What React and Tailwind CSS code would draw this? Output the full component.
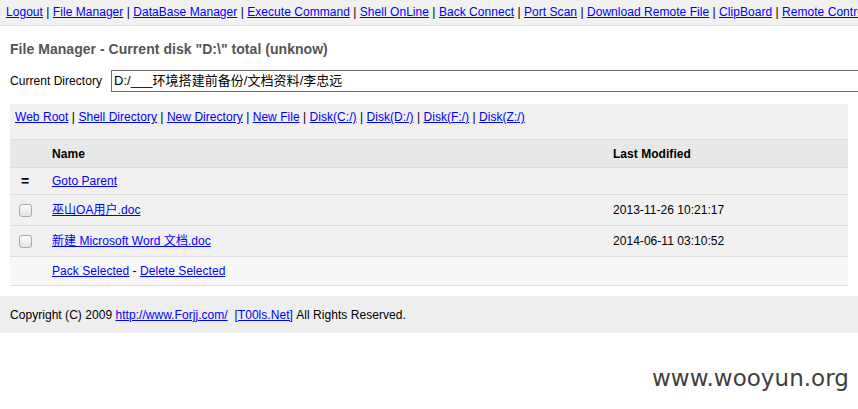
const navLinks = [
  "Logout",
  "File Manager",
  "DataBase Manager",
  "Execute Command",
  "Shell OnLine",
  "Back Connect",
  "Port Scan",
  "Download Remote File",
  "ClipBoard",
  "Remote Control",
];

const dirLinks = [
  "Web Root",
  "Shell Directory",
  "New Directory",
  "New File",
  "Disk(C:/)",
  "Disk(D:/)",
  "Disk(F:/)",
  "Disk(Z:/)",
];

const files = [
  { name: "巫山OA用户.doc", modified: "2013-11-26 10:21:17" },
  { name: "新建 Microsoft Word 文档.doc", modified: "2014-06-11 03:10:52" },
];

function LinkList({ items }) {
  return (
    <span>
      {items.map((item, index) => (
        <span key={item}>
          {index > 0 && <span className="text-black"> | </span>}
          <a href="#" className="text-[#0000ff] underline">
            {item}
          </a>
        </span>
      ))}
    </span>
  );
}

function Checkbox() {
  return (
    <span className="block h-[13px] w-[13px] rounded-[3px] border border-[#a9a9a9] bg-[linear-gradient(180deg,#fdfdfd,#e3e3e3)]" />
  );
}

export default function App() {
  return (
    <div className="relative h-[409px] w-[858px] overflow-hidden bg-white font-['Liberation_Sans',Arial,sans-serif] text-[12px] tracking-[0.04px] text-black">
      <nav className="flex h-[26px] items-center overflow-hidden whitespace-nowrap border-b border-[#dddddd] bg-[#f1f1f1] pb-[1px] pl-[6px]">
        <LinkList items={navLinks} />
      </nav>

      <div className="whitespace-nowrap px-[10px]">
        <h2 className="mt-[14px] text-[14px] font-bold leading-[18px] text-[#555555]">
          File Manager - Current disk "D:\" total (unknow)
        </h2>

        <div className="mt-[12px] flex items-center">
          <span className="w-[101px] shrink-0">Current Directory</span>
          <div className="flex h-[22px] w-[760px] shrink-0 items-center border border-[#707070] px-[2px] font-['Liberation_Sans','Noto_Sans_CJK_SC',sans-serif] text-[13px]">
            D:/___环境搭建前备份/文档资料/李忠远
          </div>
        </div>

        <div className="mt-[12px] h-[36px] border-b border-[#dddddd] bg-[#f1f1f1] pl-[5px] pt-[5px] leading-[16px]">
          <LinkList items={dirLinks} />
        </div>

        <div className="flex h-[28px] items-center border-b border-[#dddddd] bg-[#e8e8e8] font-bold">
          <span className="w-[42px]" />
          <span className="w-[561px]">Name</span>
          <span>Last Modified</span>
        </div>

        <div className="flex h-[27px] items-center border-b border-[#dddddd] bg-[#f1f1f1]">
          <span className="w-[42px] pl-[11px] text-[14px] font-bold">=</span>
          <a href="#" className="text-[#0000ff] underline">
            Goto Parent
          </a>
        </div>

        {files.map((file) => (
          <div
            key={file.name}
            className="flex h-[31px] items-center border-b border-[#dddddd] bg-[#f1f1f1] font-['Liberation_Sans','Noto_Sans_CJK_SC',sans-serif]"
          >
            <span className="w-[42px] pl-[9px]">
              <Checkbox />
            </span>
            <span className="w-[561px]">
              <a href="#" className="text-[#0000ff] underline">
                {file.name}
              </a>
            </span>
            <span>{file.modified}</span>
          </div>
        ))}

        <div className="flex h-[29px] items-center border-b border-[#dddddd] bg-[#f8f8f8]">
          <span className="w-[42px]" />
          <a href="#" className="text-[#0000ff] underline">
            Pack Selected
          </a>
          <span>&nbsp;-&nbsp;</span>
          <a href="#" className="text-[#0000ff] underline">
            Delete Selected
          </a>
        </div>
      </div>

      <footer className="mt-[10px] flex h-[37px] items-center whitespace-nowrap bg-[#eeeeee] px-[10px]">
        Copyright (C) 2009&nbsp;
        <a href="#" className="text-[#0000ff] underline">
          http://www.Forjj.com/
        </a>
        &nbsp;&nbsp;
        <a href="#" className="text-[#0000ff] underline">
          [T00ls.Net]
        </a>
        &nbsp;All Rights Reserved.
      </footer>

      <span className="absolute left-[652px] top-[367px] font-['DejaVu_Sans',sans-serif] text-[23px] leading-[23px] text-[#404040]">
        www.wooyun.org
      </span>
    </div>
  );
}
